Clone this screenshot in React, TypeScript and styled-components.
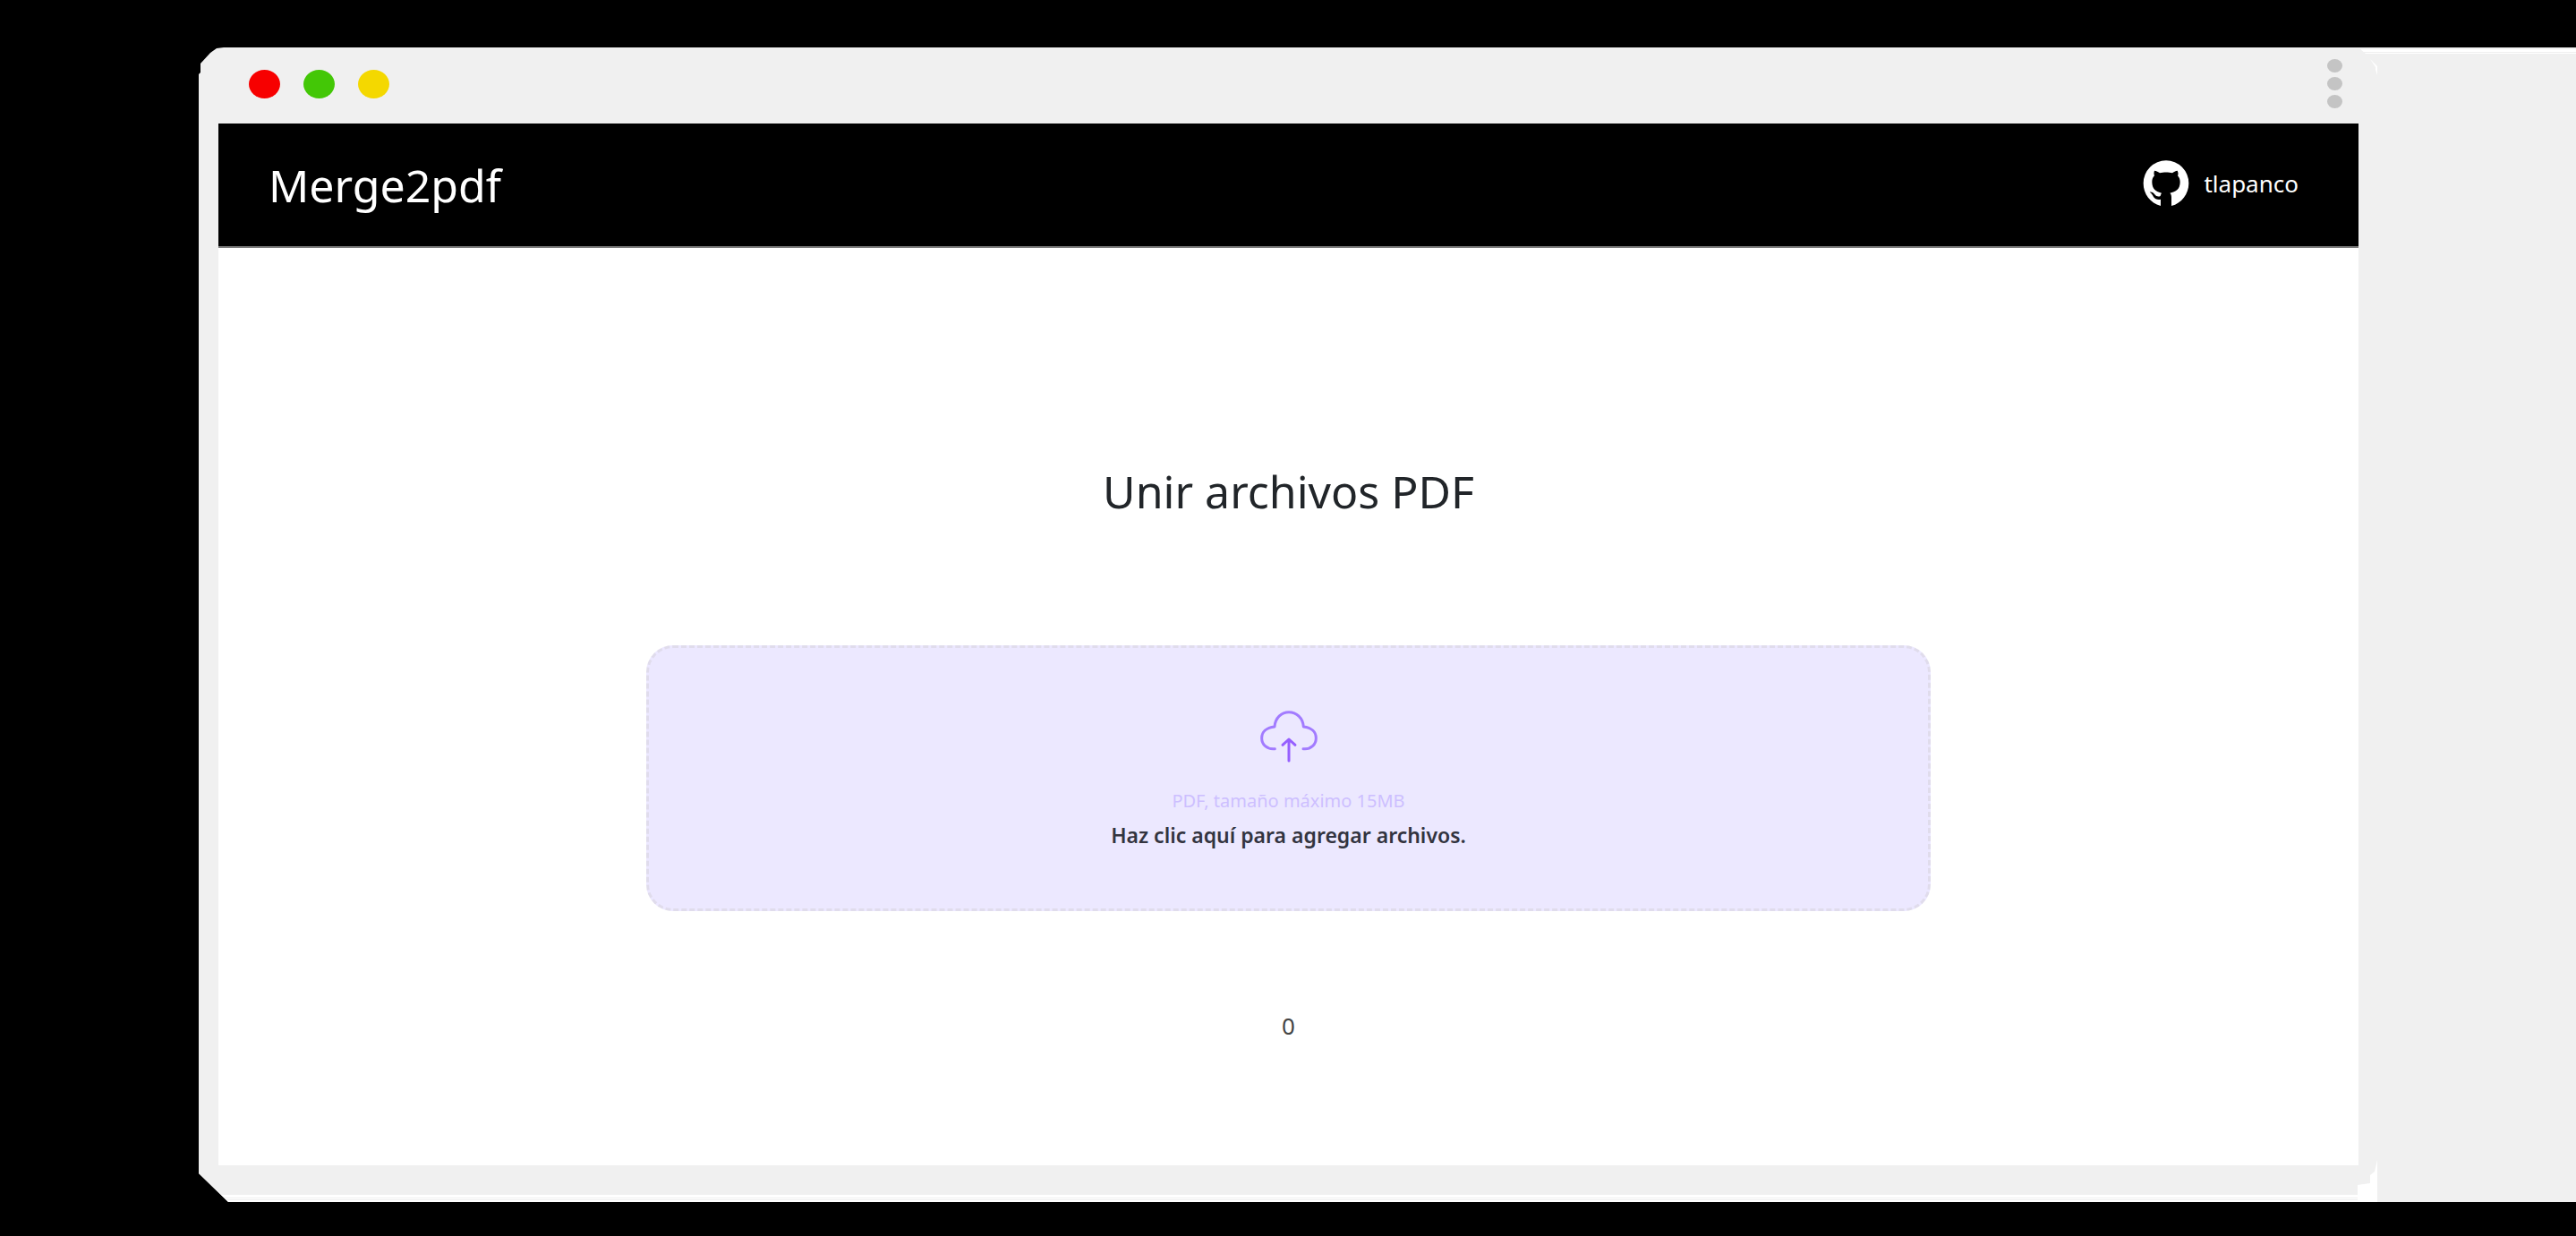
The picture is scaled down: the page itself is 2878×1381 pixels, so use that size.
import React, { useState } from "react";
import styled, { createGlobalStyle } from "styled-components";

const GlobalStyle = createGlobalStyle`
  *, *::before, *::after { box-sizing: border-box; }
  body {
    margin: 0;
    background: #000;
    color: #212529;
    font-family: "Noto Sans", "Open Sans", sans-serif;
  }
`;

const Stage = styled.div`
  padding: 53px 0 37px 222px;
`;

const Frame = styled.div`
  position: relative;
  background: #f0f0f0;
  clip-path: polygon(
    0 30px, 2px 28px, 2px 18px, 13px 6px, 20px 1px, 28px 0,
    100% 0, 100% 100%, 33px 100%, 0 calc(100% - 32px)
  );
`;

const TitleBar = styled.div`
  display: flex;
  height: 85px;
  padding-left: 56px;
`;

const Lights = styled.div`
  display: flex;
  gap: 26px;
  padding-top: 25px;
  flex: 1;
`;

const Light = styled.button<{ $color: string }>`
  width: 35px;
  height: 32px;
  padding: 0;
  border: 0;
  border-radius: 50%;
  background: ${(p) => p.$color};
`;

const MenuButton = styled.button`
  display: flex;
  flex-direction: column;
  gap: 5px;
  margin: 0 18px 0 0;
  padding: 13px 0 0;
  border: 0;
  background: none;
`;

const MenuDot = styled.span`
  width: 17px;
  height: 15px;
  border-radius: 50%;
  background: #c4c4c4;
`;

const Edge = styled.div`
  width: 243px;
`;

const EdgeLine = styled.div`
  height: 7px;
  background: linear-gradient(#f0f0f0 0 2px, #fff 2px 5px, #f0f0f0 5px 6px, #fff 6px 7px);
  clip-path: polygon(0 0, 100% 0, 100% 100%, 8px 100%);
`;

const Glint = styled.svg`
  display: block;
  width: 8px;
  height: 18px;
  margin: 6px 0 0 13px;
`;

const Viewport = styled.div`
  margin: 0 243px 0 22px;
  background: #fff;
`;

const Header = styled.header`
  display: flex;
  align-items: center;
  justify-content: space-between;
  height: 139px;
  padding: 0 67px 0 56px;
  border-bottom: 2px solid #777;
  background: #000;
  color: #fff;
`;

const Brand = styled.a`
  color: inherit;
  font-size: 50px;
  line-height: 72px;
  text-decoration: none;
`;

const Profile = styled.a`
  display: flex;
  align-items: center;
  gap: 16px;
  padding-bottom: 3px;
  color: inherit;
  font-size: 26px;
  line-height: 36px;
  text-decoration: none;
`;

const GithubMark = styled.svg`
  width: 52px;
  height: 52px;
`;

const Main = styled.main`
  display: flex;
  flex-direction: column;
  align-items: center;
  padding: 236px 0 138px;
`;

const Title = styled.h1`
  margin: 0 0 136px;
  font-size: 50px;
  font-weight: 400;
  line-height: 72px;
`;

const DropZone = styled.label`
  display: flex;
  flex-direction: column;
  align-items: center;
  width: 60%;
  padding: 70px 0 63px;
  border: 3px dashed #e0dcec;
  border-radius: 30px;
  background: #ece8ff;
  cursor: pointer;
`;

const FileInput = styled.input`
  position: absolute;
  width: 1px;
  height: 1px;
  opacity: 0;
`;

const CloudIcon = styled.svg`
  width: 64px;
  height: 60px;
  margin-bottom: 22px;
`;

const Hint = styled.span`
  color: #cdbfff;
  font-size: 20px;
  line-height: 38px;
`;

const Prompt = styled.span`
  color: #33343f;
  font-size: 23px;
  font-weight: 600;
  line-height: 38px;
`;

const Count = styled.output`
  margin-top: 110px;
  color: #444;
  font-size: 26px;
  line-height: 36px;
`;

const Base = styled.div`
  height: 41px;
  margin-right: 222px;
  background: linear-gradient(
    #f0f0f0 0 33px, #fff 33px 36px, #f0f0f0 36px 37px, #fff 37px 38px, #f0f0f0 38px 39px, #fff 39px
  );
`;

const Notch = styled.svg`
  position: absolute;
  right: 222px;
  bottom: 0;
  width: 24px;
  height: 47px;
`;

export default function App() {
  const [count, setCount] = useState(0);

  return (
    <>
      <GlobalStyle />
      <Stage>
        <Frame>
          <TitleBar>
            <Lights>
              <Light $color="#f70000" aria-label="Cerrar" />
              <Light $color="#43c706" aria-label="Maximizar" />
              <Light $color="#f4d800" aria-label="Minimizar" />
            </Lights>
            <MenuButton aria-label="Menú">
              <MenuDot />
              <MenuDot />
              <MenuDot />
            </MenuButton>
            <Edge>
              <EdgeLine />
              <Glint viewBox="0 0 8 18" aria-hidden="true">
                <path d="M0 0 L8 8 V18 L6 12 V9 Z" fill="#fff" />
              </Glint>
            </Edge>
          </TitleBar>
          <Viewport>
            <Header>
              <Brand href="#">Merge2pdf</Brand>
              <Profile href="#tlapanco">
                <GithubMark viewBox="25 21 156 156" fill="#fff" aria-hidden="true">
                  <path d="M85 174 C50 164 27 134 27 98 A76 76 0 0 1 179 98 C179 134 155 165 121 174 V144 C121 138 119 134 116 131 C136 128 150 118 150 94 C150 85 147 78 142 73 C145 67 143 60 141 56 C135 56 128 61 124 64 C112 61 94 61 82 64 C78 61 70 56 64 56 C62 62 62 67 64 73 C58 79 56 86 56 94 C56 118 70 128 88 131 C86 134 85 137 84 141 C78 144 70 143 65 136 C61 130 55 126 48 128 C55 132 58 138 61 144 C66 152 76 154 85 152 Z" />
                </GithubMark>
                tlapanco
              </Profile>
            </Header>
            <Main>
              <Title>Unir archivos PDF</Title>
              <DropZone htmlFor="files">
                <FileInput
                  id="files"
                  type="file"
                  accept="application/pdf"
                  multiple
                  onChange={(e) => setCount(e.target.files ? e.target.files.length : 0)}
                />
                <CloudIcon
                  viewBox="0 0 192 180"
                  fill="none"
                  stroke="#a27bff"
                  strokeWidth="9"
                  strokeLinecap="round"
                  strokeLinejoin="round"
                  aria-hidden="true"
                >
                  <path d="M49 128 C22 131 5 113 5 92 C5 72 20 57 48 54 C50 24 71 5 96 5 C121 5 143 24 145 54 C172 57 187 72 187 92 C187 113 170 131 144 128" />
                  <path d="M96 168 V97 M75 115 L96 96 L117 115" stroke="#965fff" />
                </CloudIcon>
                <Hint>PDF, tamaño máximo 15MB</Hint>
                <Prompt>Haz clic aquí para agregar archivos.</Prompt>
              </DropZone>
              <Count htmlFor="files">{count}</Count>
            </Main>
          </Viewport>
          <Base />
          <Notch viewBox="0 0 24 47" aria-hidden="true">
            <path d="M24 0 V47 H2 V28 L16 26 V17 L21 13 Z" fill="#fff" />
          </Notch>
        </Frame>
      </Stage>
    </>
  );
}
